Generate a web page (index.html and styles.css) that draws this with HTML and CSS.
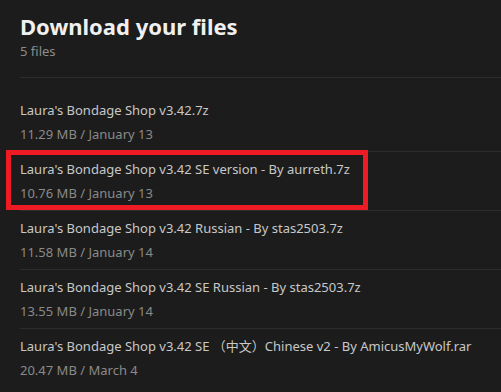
FILE: index.html
```html
<!DOCTYPE html>
<html lang="en">
<head>
  <meta charset="UTF-8" />
  <meta name="viewport" content="width=device-width, initial-scale=1.0"/>
  <title>Download your files</title>
  <link rel="stylesheet" href="styles.css">
</head>
<body>

<div class="header">
  <h1>Download your files</h1>
  <div class="count">5 files</div>
</div>

<ul class="file-list">
  <li>
    <div class="file-name">Laura's Bondage Shop v3.42.7z</div>
    <div class="file-meta">11.29 MB / January 13</div>
  </li>
  <li class="marked">
    <div class="file-name">Laura's Bondage Shop v3.42 SE version - By aurreth.7z</div>
    <div class="file-meta">10.76 MB / January 13</div>
    <span class="highlight"></span>
  </li>
  <li>
    <div class="file-name">Laura's Bondage Shop v3.42 Russian - By stas2503.7z</div>
    <div class="file-meta">11.58 MB / January 14</div>
  </li>
  <li>
    <div class="file-name">Laura's Bondage Shop v3.42 SE Russian - By stas2503.7z</div>
    <div class="file-meta">13.55 MB / January 14</div>
  </li>
  <li>
    <div class="file-name">Laura's Bondage Shop v3.42 SE （中文）Chinese v2 - By AmicusMyWolf.rar</div>
    <div class="file-meta">20.47 MB / March 4</div>
  </li>
</ul>

</body>
</html>
```

FILE: styles.css
```css
body {
  font-family: "Noto Sans", "Noto Sans CJK SC", sans-serif;
  margin: 0;
  padding-top: 12px;
  background: #1c1c1c;
  overflow: hidden;
}

.header {
  margin-left: 20px;
  padding-bottom: 17px;
  border-bottom: 1px solid #2d2d2d;
}

.header h1 {
  margin: 0;
  font-size: 22px;
  line-height: 28px;
  font-weight: bold;
  color: #f0f0f0;
}

.count {
  margin-top: 2px;
  font-size: 13px;
  line-height: 18px;
  color: #8c8c8c;
}

.file-list {
  list-style: none;
  margin: 15px 0 0 20px;
  padding: 0;
}

.file-list li {
  position: relative;
  padding: 8px 0;
  border-bottom: 1px solid #2d2d2d;
  font-size: 13px;
  line-height: 18px;
}

.file-list li:last-child {
  border-bottom: none;
}

.file-name {
  color: #c8c8c8;
  white-space: nowrap;
}

.file-meta {
  margin-top: 6px;
  color: #8a8a8a;
}

.highlight {
  position: absolute;
  top: -2px;
  bottom: 0;
  left: -14px;
  width: 362px;
  box-sizing: border-box;
  border: 5px solid #ed1c24;
}
```
